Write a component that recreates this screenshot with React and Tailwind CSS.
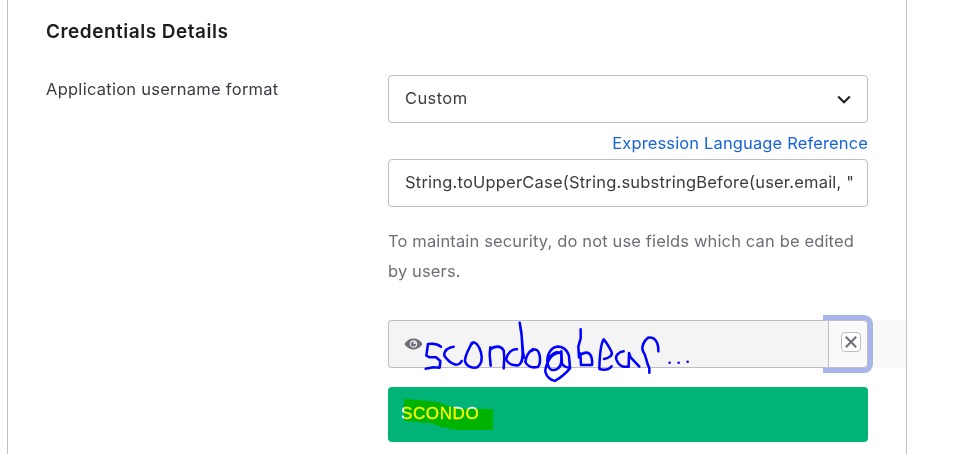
function Handwriting() {
  return (
    <svg
      className="pointer-events-none absolute -left-2 -top-[15px] z-20 h-[85px] w-[340px]"
      viewBox="0 0 1020 255"
      fill="none"
      stroke="#0000ff"
      strokeWidth="7.6"
      strokeLinecap="round"
      strokeLinejoin="round"
    >
      <path d="M183 125C172 116 157 115 144 117L139 152L149 157H168L181 168L179 188L160 187L137 191" />
      <path d="M221 125C207 126 191 136 193 152C202 165 214 176 228 179C237 179 241 176 245 168" />
      <path d="M275 114C269 130 254 150 255 169C261 187 280 190 292 187C307 176 306 155 303 143C298 126 290 113 280 112L275 117" />
      <path d="M331 127L329 148L332 182M330 134C344 121 363 122 371 136L373 157L371 190" />
      <path d="M411 133C397 130 382 144 378 163C385 178 401 182 415 181C428 175 427 160 428 145L425 92L419 53L424 82L429 140L432 158" />
      <path d="M459 132C451 137 439 148 436 171C444 186 459 189 473 186C483 178 481 153 476 142C472 132 461 131 455 138" />
      <path d="M541 145C529 136 513 148 505 163C500 176 504 186 512 193C526 200 542 189 544 171V139L546 177C552 184 561 188 568 188M505 184C497 163 505 137 523 127C543 120 561 132 567 153L570 190C557 205 540 219 526 227C515 229 499 215 496 200C495 187 502 174 508 163C515 151 525 145 541 142" />
      <path d="M602 73V100L595 125L597 157L601 145L603 180H636C638 168 635 151 627 145C620 141 610 144 603 148" />
      <path d="M672 162C688 159 698 151 695 141C688 127 680 113 671 103C661 118 659 148 658 192C673 196 688 193 695 184" />
      <path d="M731 139C717 141 705 151 709 163C713 174 719 183 731 185H746L747 144L752 157L778 185" />
      <path d="M789 139C783 125 793 106 804 98C822 94 836 109 835 139M789 139C795 147 799 162 803 178L808 190V203" />
      <g fill="#0000ff" stroke="none">
        <circle cx="869" cy="173" r="3.8" />
        <circle cx="896" cy="173" r="3.8" />
        <circle cx="923" cy="170" r="3.8" />
      </g>
    </svg>
  );
}

export default function App() {
  return (
    <div className="h-[454px] w-full overflow-hidden bg-white font-['Inter',sans-serif] text-[16.5px] text-[#3a3b42]">
      <main className="ml-[7px] h-full w-[900px] border-x border-[#bdbdc3] pl-[38px] pt-5">
        <h2 className="text-[19px] font-semibold leading-6 tracking-[0.5px] text-[#1d1d21]">Credentials Details</h2>
        <div className="mt-[31px] flex">
          <div className="w-[342px] pt-[2px] leading-6 tracking-[0.26px]">Application username format</div>
          <div className="w-[480px]">
            <button className="flex h-12 w-full items-center justify-between rounded border border-[#bdbdc5] pl-4 pr-[16px]">
              <span className="-mt-px tracking-[0.4px]">Custom</span>
              <svg className="mt-px h-3 w-[14px]" viewBox="0 0 14 12" fill="none" stroke="#1d1d21" strokeWidth="2">
                <path d="M1.2 2.5 7 8.3 12.8 2.5" />
              </svg>
            </button>
            <a className="mt-2 block whitespace-nowrap text-right leading-6 tracking-[0.14px] text-[#1662dd]">Expression Language Reference</a>
            <div className="mt-1 flex h-12 items-center whitespace-nowrap rounded border border-[#bdbdc5] px-4 pb-px tracking-[0.2px]">
              String.toUpperCase(String.substringBefore(user.email, "
            </div>
            <p className="mt-[19px] whitespace-nowrap leading-[30px] tracking-[0.14px] text-[#6e6e78]">
              To maintain security, do not use fields which can be edited<br />by users.
            </p>
            <div className="relative mt-[34px] flex h-12 w-[518px] bg-[#fafafa]">
              <div className="relative z-10 flex w-[440px] items-center rounded-l border border-r-0 border-[#bdbdc5] bg-[#f4f4f4] pl-[15px]">
                <svg className="h-[14px] w-[19px]" viewBox="0 0 19 14">
                  <path d="M.5 7C5-.3 14-.3 18.5 7 14 14.3 5 14.3.5 7Z" fill="#6e6e78" />
                  <circle cx="9.5" cy="7" r="3.1" fill="none" stroke="#f4f4f4" strokeWidth="1.1" />
                  <path d="M9.5 7V4.6A2.4 2.4 0 0 1 11.9 7Z" fill="#f4f4f4" />
                </svg>
              </div>
              <div className="flex w-10 items-center rounded-r border border-[#bdbdc5] bg-[#fafafa] pb-[5px] pl-3 shadow-[0_0_0_5px_#a7b5ec]">
                <button className="flex size-5 items-center justify-center rounded border border-[#bdbdc5] bg-white">
                  <svg className="size-3" viewBox="0 0 12 12" stroke="#6e6e78" strokeWidth="2">
                    <path d="m.8.8 10.4 10.4M11.2.8.8 11.2" />
                  </svg>
                </button>
              </div>
              <Handwriting />
            </div>
            <div className="relative mt-[19px] flex h-[55px] items-center rounded bg-[#00b377] pb-px pl-[13px] font-['Liberation_Sans',Arial,sans-serif] text-[17px] tracking-[0.6px] text-white [-webkit-text-stroke:0.3px_white]">
              SCONDO
              <svg className="absolute left-[16px] top-[12px] h-[31px] w-[89px] mix-blend-multiply" viewBox="0 0 267 93">
                <path d="M0 0 52 4 104 10 125 18 164 30H267V93H154L112 84 80 73 30 68 0 65Z" fill="#ffff00" />
              </svg>
            </div>
          </div>
        </div>
      </main>
    </div>
  );
}
